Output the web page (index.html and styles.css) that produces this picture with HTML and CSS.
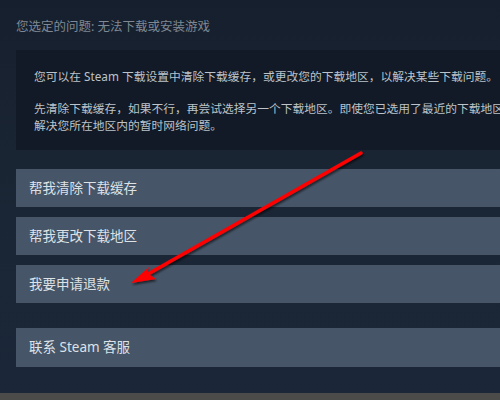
FILE: index.html
```html
<!DOCTYPE html>
<html lang="zh-CN">
<head>
  <meta charset="UTF-8">
  <title>Steam 客服</title>
  <link rel="stylesheet" href="styles.css">
</head>
<body>
  <div class="page">
    <div class="issue-title">您选定的问题: 无法下载或安装游戏</div>

    <div class="info-box">
      <p>您可以在 Steam 下载设置中清除下载缓存，或更改您的下载地区，以解决某些下载问题。</p>
      <p>先清除下载缓存，如果不行，再尝试选择另一个下载地区。即使您已选用了最近的下载地区，<br>解决您所在地区内的暂时网络问题。</p>
    </div>

    <div class="options">
      <div class="option-btn">帮我清除下载缓存</div>
      <div class="option-btn">帮我更改下载地区</div>
      <div class="option-btn">我要申请退款</div>
      <div class="option-btn contact">联系 Steam 客服</div>
    </div>
  </div>
  <div class="footer-bar"></div>

  <!-- red arrow annotation -->
  <svg class="arrow" width="500" height="400" viewBox="0 0 500 400">
    <defs>
      <filter id="shadow" x="-20%" y="-20%" width="140%" height="140%">
        <feDropShadow dx="1" dy="2" stdDeviation="1.2" flood-color="#000" flood-opacity="0.6"/>
      </filter>
    </defs>
    <g filter="url(#shadow)">
      <line x1="361" y1="153" x2="148" y2="274" stroke="#ff0000" stroke-width="3.5" stroke-linecap="round"/>
      <polygon points="131,283 149,267 147,273 156,279" fill="#ff0000"/>
    </g>
  </svg>
</body>
</html>
```

FILE: styles.css
```css
body {
  margin: 0;
  width: 500px;
  height: 400px;
  overflow: hidden;
  background: linear-gradient(to bottom, #161f2d 0%, #1a2534 40%, #1b2738 100%);
  font-family: "Noto Sans", "Noto Sans CJK SC", sans-serif;
  position: relative;
}

.page {
  width: 484px;
  padding: 18px 0 0 16px;
}

.issue-title {
  font-size: 12.5px;
  line-height: 18px;
  color: #7f8893;
  margin-bottom: 14px;
  white-space: nowrap;
}

.info-box {
  background-color: #111a26;
  padding: 18px 0 16px 18px;
  font-size: 11.75px;
  line-height: 17px;
  color: #bcc3ca;
  white-space: nowrap;
  overflow: hidden;
}

.info-box p {
  margin: 0;
}

.info-box p + p {
  margin-top: 15px;
}

.options {
  margin-top: 19px;
  display: flex;
  flex-direction: column;
  gap: 10px;
}

.option-btn {
  height: 38px;
  line-height: 38px;
  padding-left: 13px;
  background-color: #465568;
  color: #dde2e7;
  font-size: 13.5px;
  white-space: nowrap;
}

.option-btn.contact {
  margin-top: 15px;
  height: 39px;
  line-height: 39px;
}

.footer-bar {
  position: absolute;
  left: 0;
  right: 0;
  bottom: 0;
  height: 7px;
  background-color: #4b4b4a;
}

.arrow {
  position: absolute;
  left: 0;
  top: 0;
  pointer-events: none;
}
```
